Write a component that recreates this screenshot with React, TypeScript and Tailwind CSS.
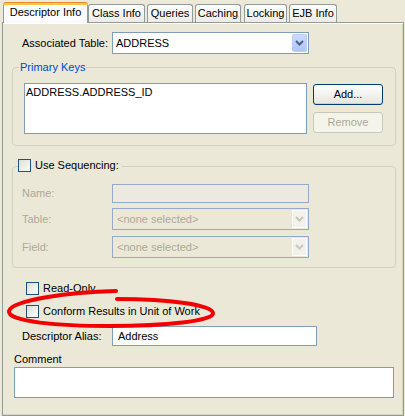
import React from "react";

function Checkbox() {
  return (
    <div className="w-[13px] h-[13px] shrink-0 border border-[#1C5180] bg-linear-to-br from-[#DCDCD7] to-white" />
  );
}

function Chevron({ disabled }: { disabled?: boolean }) {
  return (
    <svg width="9" height="6" viewBox="0 0 9 6">
      <path
        d="M1 1 L4.5 4.5 L8 1"
        fill="none"
        stroke={disabled ? "#C9C7BA" : "#4D6185"}
        strokeWidth="2"
      />
    </svg>
  );
}

function Combo({ text, disabled }: { text: string; disabled?: boolean }) {
  return (
    <div
      className={
        disabled
          ? "w-[197px] h-[22px] border border-[#94AACB] p-[1px] flex"
          : "w-[197px] h-[22px] border border-[#7F9DB9] bg-white p-[1px] flex"
      }
    >
      <div
        className={
          disabled
            ? "flex-1 flex items-center pl-[3px] text-[#ACA899]"
            : "flex-1 flex items-center pl-[2px] text-black"
        }
      >
        {text}
      </div>
      {disabled ? (
        <div className="w-[15px] h-full border border-white bg-[#F2F1EA] flex items-center justify-center">
          <Chevron disabled />
        </div>
      ) : (
        <div className="w-[15px] h-full rounded-[2px] border border-[#B9CDF6] bg-linear-to-b from-[#CCDAFD] to-[#B1C5F5] flex items-center justify-center">
          <Chevron />
        </div>
      )}
    </div>
  );
}

function Tab({ label, w, ml }: { label: string; w: string; ml: string }) {
  return (
    <div
      className={`${w} ${ml} h-[18px] border-t border-x border-[#919B9C] rounded-t-[3px] bg-linear-to-b from-white to-[#ECEBE6] flex justify-center pt-[2px]`}
    >
      <span className="leading-[13px] whitespace-nowrap">{label}</span>
    </div>
  );
}

export default function App() {
  return (
    <div className="relative w-[405px] h-[416px] overflow-hidden bg-[#ECE9D8] text-[11px] leading-[13px] text-black font-['Liberation_Sans',Arial,sans-serif]">
      {/* Tabs */}
      <div className="flex items-end h-[22px]">
        <div className="relative z-10 ml-[3px] w-[85px] h-[21px] -mb-[1px] flex flex-col">
          <div className="h-[3px] rounded-t-[3px] border-t border-[#E68B2C] bg-[#FFC83C]" />
          <div className="flex-1 border-x border-[#919B9C] bg-[#FCFCFE] flex justify-center pt-[1px]">
            <span className="leading-[13px] whitespace-nowrap">Descriptor Info</span>
          </div>
        </div>
        <Tab label="Class Info" w="w-[57px]" ml="ml-0" />
        <Tab label="Queries" w="w-[46px]" ml="ml-[2px]" />
        <Tab label="Caching" w="w-[46px]" ml="ml-[2px]" />
        <Tab label="Locking" w="w-[43px]" ml="ml-[3px]" />
        <Tab label="EJB Info" w="w-[48px]" ml="ml-[2px]" />
      </div>

      {/* Panel */}
      <div className="ml-[2px] w-[402px] h-[394px] border border-[#919B9C] bg-[#EBE8D7] shadow-[inset_0_1px_0_#ffffff,inset_-1px_-1px_0_#D6D3C1] flex flex-col">
        {/* Associated Table */}
        <div className="mt-[9px] ml-[19px] flex items-center h-[22px]">
          <div className="w-[90px]">Associated Table:</div>
          <Combo text="ADDRESS" />
        </div>

        {/* Primary Keys */}
        <div className="relative mt-[13px] ml-[9px] w-[384px] h-[79px] border border-[#D0D0BF] rounded-[4px] pt-[15px] pl-[11px] flex items-start">
          <span className="absolute -top-[7px] left-[6px] px-[1px] bg-[#EBE8D7] text-[#0046D5]">
            Primary Keys
          </span>
          <div className="w-[283px] h-[51px] border border-[#7F9DB9] bg-white pt-[2px] pl-[1px]">
            ADDRESS.ADDRESS_ID
          </div>
          <div className="ml-[6px] mt-[1px] flex flex-col gap-[7px]">
            <div className="w-[70px] h-[21px] rounded-[3px] border border-[#003C74] bg-linear-to-b from-white to-[#E6E5DE] shadow-[inset_0_-1px_0_#D6D0C5] flex items-center justify-center">
              Add...
            </div>
            <div className="w-[70px] h-[21px] rounded-[3px] border border-[#C9C7BA] bg-[#F5F4EA] text-[#ACA899] flex items-center justify-center">
              Remove
            </div>
          </div>
        </div>

        {/* Use Sequencing */}
        <div className="relative mt-[20px] ml-[9px] w-[384px] h-[102px] border border-[#D0D0BF] rounded-[4px] pt-[17px] pl-[9px] flex flex-col">
          <div className="absolute -top-[8px] left-[5px] pr-[3px] bg-[#EBE8D7] flex items-center gap-[4px]">
            <Checkbox />
            <span>Use Sequencing:</span>
          </div>
          <div className="flex items-center h-[19px]">
            <div className="w-[90px] text-[#ACA899]">Name:</div>
            <div className="w-[197px] h-[19px] border border-[#94AACB] bg-[#ECEAE0]" />
          </div>
          <div className="mt-[5px] flex items-center h-[22px]">
            <div className="w-[90px] text-[#ACA899]">Table:</div>
            <Combo text="<none selected>" disabled />
          </div>
          <div className="mt-[6px] flex items-center h-[22px]">
            <div className="w-[90px] text-[#ACA899]">Field:</div>
            <Combo text="<none selected>" disabled />
          </div>
        </div>

        {/* Checkboxes */}
        <div className="mt-[14px] ml-[23px] flex items-center gap-[4px] h-[13px]">
          <Checkbox />
          <span>Read-Only</span>
        </div>
        <div className="mt-[10px] ml-[23px] flex items-center gap-[4px] h-[13px]">
          <Checkbox />
          <span>Conform Results in Unit of Work</span>
        </div>

        {/* Descriptor Alias */}
        <div className="mt-[8px] ml-[19px] flex items-center h-[20px]">
          <div className="w-[90px]">Descriptor Alias:</div>
          <div className="w-[205px] h-[20px] border border-[#7F9DB9] bg-white pl-[5px] flex items-center">
            Address
          </div>
        </div>

        {/* Comment */}
        <div className="mt-[7px] ml-[11px]">Comment</div>
        <div className="mt-[1px] ml-[11px] w-[380px] h-[31px] border border-[#7F9DB9] bg-white" />
      </div>

      {/* Red hand-drawn ellipse */}
      <svg
        className="absolute left-0 top-0 pointer-events-none"
        width="405"
        height="416"
        viewBox="0 0 405 416"
      >
        <path
          d="M116 291 C70 292 12 300 9 311 C7 322 60 326 110 326 C165 326 214 321 213 313 C212 305 170 299 117 299"
          fill="none"
          stroke="#F20000"
          strokeWidth="4"
          strokeLinecap="round"
        />
      </svg>
    </div>
  );
}
